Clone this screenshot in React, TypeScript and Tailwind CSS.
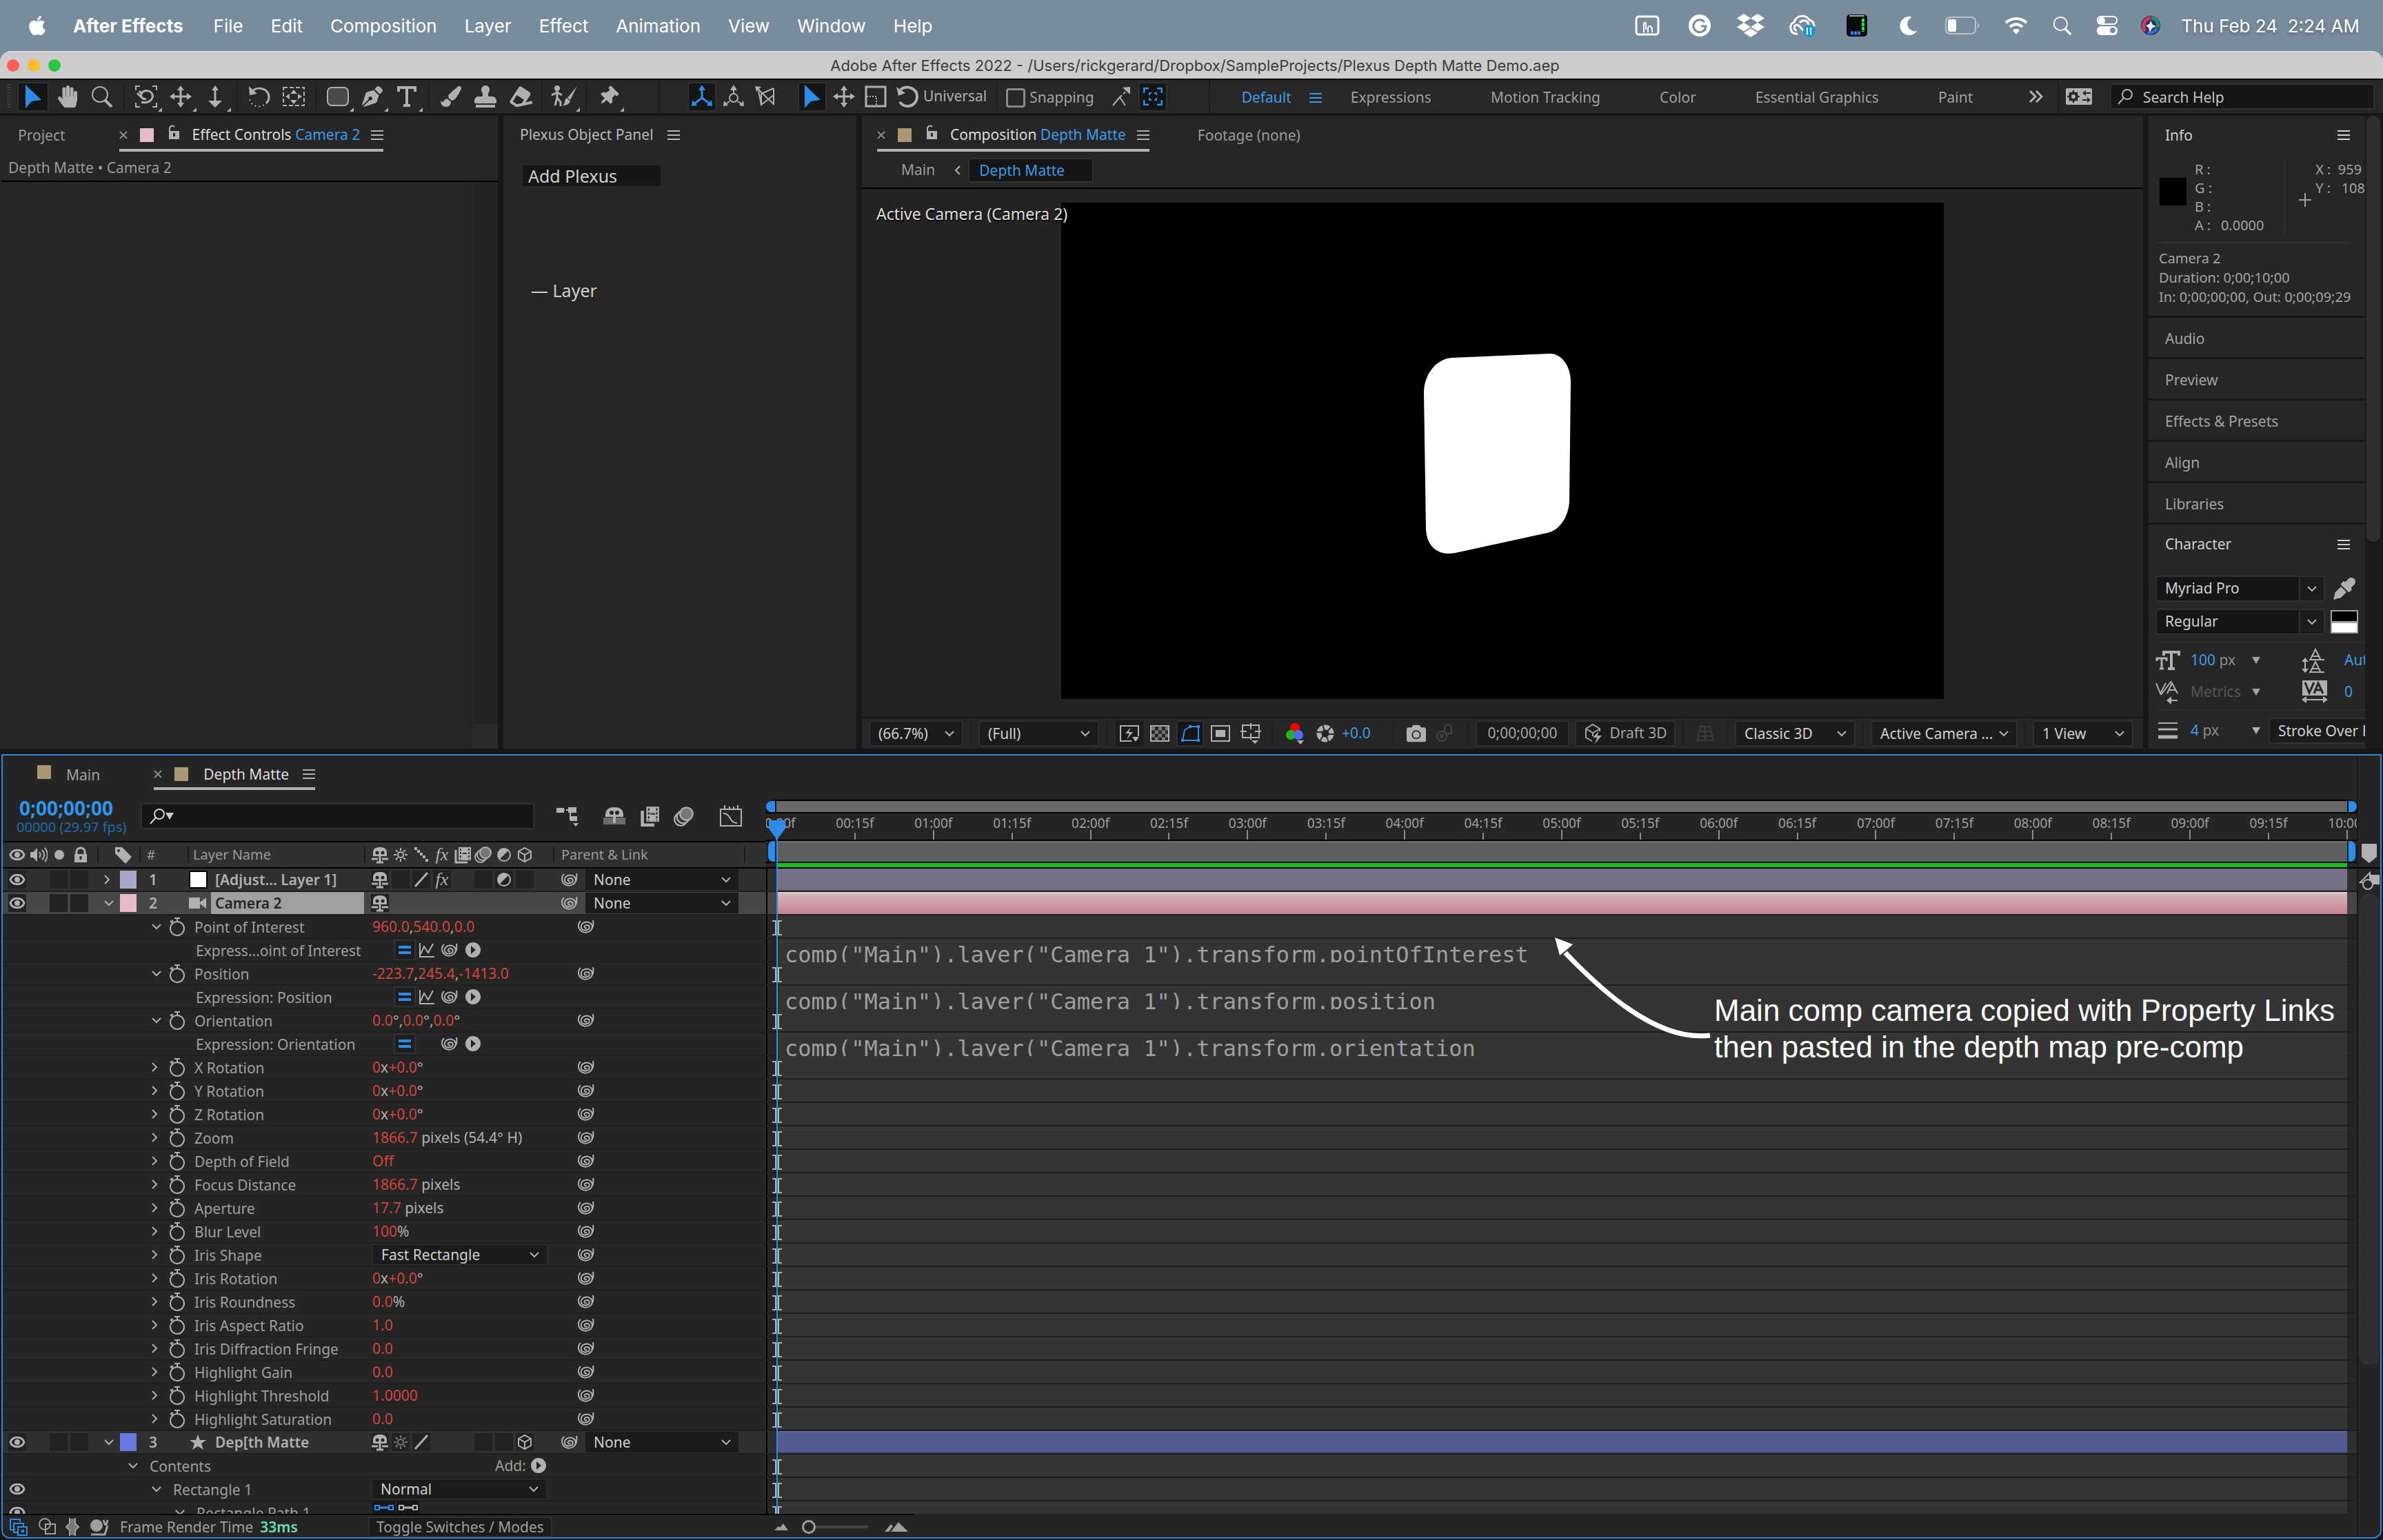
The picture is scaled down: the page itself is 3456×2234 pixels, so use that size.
import React from "react";
import {
  FaApple,
  FaDropbox,
  FaMoon,
  FaHandPaper,
  FaEraser,
  FaPaintBrush,
  FaThumbtack,
  FaCamera,
  FaPenNib,
  FaStamp,
  FaEyeDropper,
} from "react-icons/fa";

interface IconProps {
  w?: number;
  h?: number;
  box?: string;
  className?: string;
  children: React.ReactNode;
}

// Stroke icon base, colour comes from the text colour
const Icon: React.FC<IconProps> = ({
  w = 32,
  h = 32,
  box,
  className = "",
  children,
}) => (
  <svg
    width={w}
    height={h}
    viewBox={box ?? `0 0 ${w} ${h}`}
    fill="none"
    stroke="currentColor"
    strokeWidth={2}
    className={`shrink-0 ${className}`}
    aria-hidden="true"
  >
    {children}
  </svg>
);

const ChevronDown = () => (
  <Icon w={16} h={10}>
    <path d="M2 2l6 6 6-6" />
  </Icon>
);

const ChevronRight = () => (
  <Icon w={10} h={16}>
    <path d="M2 2l6 6-6 6" />
  </Icon>
);

const Burger = () => (
  <Icon w={18} h={16}>
    <path d="M0 2h18M0 8h18M0 14h18" />
  </Icon>
);

const Close = () => (
  <Icon w={12} h={12} className="text-[#8a8a8a]">
    <path d="M1 1l10 10M11 1L1 11" />
  </Icon>
);

const OpenLock = () => (
  <Icon w={18} h={22} className="-mt-2">
    <path d="M3 9V5a4 4 0 0 1 7-2" />
    <rect x="2" y="9" width="15" height="12" fill="currentColor" stroke="none" />
    <path d="M9.5 12v5" stroke="#262626" strokeWidth={3} />
  </Icon>
);

const Whip = () => (
  <Icon w={24} h={22}>
    <path d="M13 13c-4 2-5-4 0-4 5 0 5 6 0 7-6 2-9-2-8-6 1-5 8-7 13-4 4 3 4 9-1 12-5 3-12 2-15-4-2-4-1-8 2-11M22 2c1 6 0 11-3 14" />
  </Icon>
);

const Eye = () => (
  <Icon w={24} h={18}>
    <path d="M2 9c3-9 17-9 20 0-3 9-17 9-20 0z" strokeWidth={3} />
    <circle cx="12" cy="9" r="4" fill="currentColor" stroke="none" />
  </Icon>
);

const Stopwatch = () => (
  <Icon w={26} h={28}>
    <circle cx="13" cy="17" r="10" />
    <path d="M13 7V2M9 2h8M3 6l3 3M5 5l2 2" />
  </Icon>
);

const PlayDot = () => (
  <Icon w={24} h={24}>
    <circle cx="12" cy="12" r="11" fill="currentColor" stroke="none" />
    <path d="M9 6l7 6-7 6z" fill="#252525" stroke="none" />
  </Icon>
);

const Graph = () => (
  <Icon w={24} h={24}>
    <path d="M2 2v20h21M3 18l5-11 6 9 7-13" />
  </Icon>
);

const Shy = () => (
  <Icon w={26} h={26}>
    <path
      d="M3 15V10C3 4 7 2 13 2s10 2 10 8v5H3z"
      fill="currentColor"
      stroke="none"
    />
    <circle cx="9" cy="10" r="2.5" fill="#252525" stroke="none" />
    <circle cx="17" cy="10" r="2.5" fill="#252525" stroke="none" />
    <path d="M13 14v10M1 19h9M16 19h9M8 24h10" strokeWidth={3} />
  </Icon>
);

const Sun = () => (
  <Icon w={24} h={24}>
    <circle cx="12" cy="12" r="4" />
    <path d="M12 2v4M12 18v4M2 12h4M18 12h4M5 5l3 3M16 16l3 3M19 5l-3 3M8 16l-3 3" />
  </Icon>
);

const Quality = ({ dotted = false }: { dotted?: boolean }) => (
  <Icon w={24} h={24}>
    {dotted ? (
      <path d="M2 3h4M6 7h4M10 11h4M14 15h4M18 20h4" strokeWidth={4} />
    ) : (
      <path d="M3 22L21 2" strokeWidth={3} />
    )}
  </Icon>
);

const Fx = () => (
  <span className="font-['Liberation_Serif',serif] text-[26px] leading-[26px] italic">
    fx
  </span>
);

const Film = () => (
  <Icon w={26} h={26}>
    <rect x="7" y="2" width="18" height="19" fill="currentColor" stroke="none" />
    <path d="M10 4v16M22 4v16" stroke="#333" strokeDasharray="3 2" />
    <path d="M13 11h6" stroke="#333" />
    <path d="M3 6v18h17" strokeWidth={3} />
  </Icon>
);

const Blur = () => (
  <Icon w={26} h={26}>
    <circle cx="9" cy="16" r="8" />
    <circle cx="12" cy="13" r="8" fill="#333" />
    <circle cx="16" cy="10" r="8" fill="#777" />
  </Icon>
);

const Adjust = () => (
  <Icon w={24} h={24}>
    <circle cx="12" cy="12" r="9" />
    <path d="M5 19A10 10 0 0 1 19 5z" fill="currentColor" stroke="none" />
  </Icon>
);

const Cube = () => (
  <Icon w={22} h={24}>
    <path d="M11 2l9 5v10l-9 5-9-5V7zM2 7l9 5 9-5M11 12v10" />
  </Icon>
);

const Axis = () => (
  <Icon w={34} h={34}>
    <path d="M17 19V6M17 19L5 28M17 19l12 9" strokeWidth={3} />
    <path
      d="M17 0l5 8H12zM2 31l1-9 7 8zM32 31l-1-9-7 8z"
      fill="currentColor"
      stroke="none"
    />
  </Icon>
);

const Pointer = () => (
  <Icon w={26} h={36}>
    <path d="M2 1v34l9-10 14-2z" fill="currentColor" stroke="none" />
  </Icon>
);

const Move = () => (
  <Icon w={32} h={32}>
    <path d="M16 4v24M4 16h24" strokeWidth={3} />
    <path
      d="M16 0l5 7H11zM16 32l-5-7h10zM0 16l7-5v10zM32 16l-7 5V11z"
      fill="currentColor"
      stroke="none"
    />
  </Icon>
);

const Lens = ({ size = 32 }: { size?: number }) => (
  <Icon w={size} h={size} box="0 0 32 32">
    <circle cx="13" cy="13" r="11" />
    <path d="M20 21l10 10" strokeWidth={4} />
  </Icon>
);

const SearchLeft = () => (
  <Icon w={24} h={24}>
    <circle cx="15" cy="9" r="7" />
    <path d="M10 14L2 23" />
  </Icon>
);

const Corner = () => (
  <Icon w={6} h={6} className="absolute right-0 bottom-0">
    <path d="M6 0v6H0z" fill="currentColor" stroke="none" />
  </Icon>
);

const Triangle = () => (
  <Icon w={12} h={12}>
    <path d="M0 1h12L6 11z" fill="currentColor" stroke="none" />
  </Icon>
);

const Star = () => (
  <Icon w={26} h={24}>
    <path
      d="M13 1l3 8h9l-7 5 3 9-8-5-8 5 3-9-7-5h9z"
      fill="currentColor"
      stroke="none"
    />
  </Icon>
);

interface SelectProps {
  label: string;
  value: string;
  className?: string;
}

const Select: React.FC<SelectProps> = ({ label, value, className = "" }) => (
  <div className={`relative shrink-0 bg-[#1b1b1b] ${className}`}>
    <select
      aria-label={label}
      className="h-full w-full appearance-none truncate bg-transparent pl-3 pr-8 text-[21px] leading-7 text-[#cfcfcf] outline-none"
    >
      <option>{value}</option>
    </select>
    <span className="pointer-events-none absolute inset-y-0 right-2.5 flex items-center">
      <ChevronDown />
    </span>
  </div>
);

const menus = [
  "File",
  "Edit",
  "Composition",
  "Layer",
  "Effect",
  "Animation",
  "View",
  "Window",
  "Help",
];

const MenuBar = () => (
  <header className="flex h-[74px] shrink-0 items-center bg-[#788c9e] pr-[34px] pl-[38px] font-[Inter,sans-serif] text-[26px] text-white [text-shadow:0_2px_4px_rgba(0,0,0,0.3)]">
    <FaApple className="mr-9 size-8" />
    <nav className="flex gap-10">
      <button className="mr-1 font-bold">After Effects</button>
      {menus.map((m) => (
        <button key={m}>{m}</button>
      ))}
    </nav>
    <div className="ml-auto flex items-center">
      <Icon w={36} h={30}>
        <rect x="2" y="2" width="32" height="26" rx="4" strokeWidth={3} />
        <path d="M13 25V13c0-3 3-3 3 0v8M19 25v-7c3-4 6-1 6 3v4" />
      </Icon>
      <Icon w={32} h={32} className="ml-[42px]">
        <circle cx="16" cy="16" r="16" fill="white" stroke="none" />
        <path d="M23 11a9 9 0 1 0 2 6h-7M24 17v6" stroke="#788c9e" strokeWidth={3} />
      </Icon>
      <FaDropbox className="ml-[38px] size-10" />
      <Icon w={40} h={34} className="ml-[34px]">
        <path d="M14 29H11a9 9 0 0 1-2-17C12 2 26 0 31 9c5 1 7 5 7 9" strokeWidth={3} />
        <path d="M13 24c-5 0-5-8 0-8 4 0 7 8 12 10M17 13c4-5 12-4 13 3" strokeWidth={3} />
        <circle cx="31" cy="25" r="9" fill="#1398d4" stroke="none" />
        <path d="M28 20v10M33 20v10" />
      </Icon>
      <Icon w={30} h={34} className="ml-[45px]">
        <rect x="0" y="1" width="30" height="32" rx="5" fill="#0b0b0b" stroke="none" />
        <path d="M4 3h22" stroke="#aaa" />
        <path d="M24 7v19" stroke="#2ee84b" strokeWidth={4} strokeDasharray="5 1" />
        <path d="M6 28h14" stroke="#3b78ff" strokeWidth={5} strokeDasharray="4 1" />
      </Icon>
      <FaMoon className="ml-[46px] size-[27px]" />
      <Icon w={50} h={26} className="ml-10">
        <rect x="1" y="1" width="43" height="24" rx="6" stroke="#b9c4ce" />
        <rect x="4" y="4" width="12" height="18" rx="3" fill="white" stroke="none" />
        <path d="M47 9c3 2 3 6 0 8z" fill="#b9c4ce" stroke="none" />
      </Icon>
      <Icon w={34} h={26} className="ml-9">
        <path d="M2 9c9-8 21-8 30 0M8 15c6-5 12-5 18 0" strokeWidth={4} />
        <path d="M17 26l-5-6c3-3 7-3 10 0z" fill="white" stroke="none" />
      </Icon>
      <span className="ml-9">
        <Lens size={28} />
      </span>
      <Icon w={30} h={28} className="ml-9">
        <rect x="1" y="1" width="28" height="11" rx="5" />
        <circle cx="7" cy="7" r="4" fill="white" />
        <rect x="0" y="15" width="30" height="13" rx="6" fill="white" stroke="none" />
        <circle cx="23" cy="21" r="4" fill="#788c9e" stroke="none" />
      </Icon>
      <Icon w={28} h={28} className="ml-[34px]">
        <circle cx="14" cy="14" r="14" fill="#2b3563" stroke="none" />
        <path d="M6 22C0 14 6 4 14 3" stroke="#d23a56" strokeWidth={5} />
        <path d="M15 3c8 1 11 8 9 14" stroke="#2f8a6b" strokeWidth={5} />
        <path d="M23 18c-3 6-9 8-14 6" stroke="#3b66d8" strokeWidth={4} />
        <path d="M14 7l3 6 5 2-6 3-3 6-2-7-4-3 5-2z" fill="#d9efff" stroke="none" />
      </Icon>
      <time className="ml-[30px] whitespace-pre">Thu Feb 24  2:24 AM</time>
    </div>
  </header>
);

const TitleBar = () => (
  <div className="flex h-[42px] shrink-0 items-center justify-center rounded-t-2xl border-t border-b-2 border-t-[#e8e8e8] border-b-black bg-[#ccc] text-[#3c3c3c]">
    <div className="flex flex-1 gap-3 pl-2.5">
      <button aria-label="Close" className="size-[18px] rounded-full bg-[#ff5f57]" />
      <button aria-label="Minimize" className="size-[18px] rounded-full bg-[#febc2e]" />
      <button aria-label="Zoom" className="size-[18px] rounded-full bg-[#28c840]" />
    </div>
    <h1 className="font-[Inter,sans-serif] text-[22px] leading-8">
      Adobe After Effects 2022 - /Users/rickgerard/Dropbox/SampleProjects/Plexus
      Depth Matte Demo.aep
    </h1>
    <div className="flex-1" />
  </div>
);

interface ToolProps {
  name: string;
  active?: boolean;
  corner?: boolean;
  slim?: boolean;
  children: React.ReactNode;
}

const Tool: React.FC<ToolProps> = ({ name, active, corner, slim, children }) => (
  <button
    aria-label={name}
    className={`relative mx-0.5 flex h-[43px] shrink-0 items-center justify-center rounded ${
      slim ? "w-[42px]" : "w-[46px]"
    } ${active ? "border-2 border-[#303030] bg-[#151515] text-[#2d8ceb]" : ""}`}
  >
    {children}
    {corner && <Corner />}
  </button>
);

const Sep = () => <span className="mx-1.5 h-9 w-0.5 shrink-0 bg-[#1f1f1f]" />;

const workspaces = [
  { name: "Expressions", gap: "ml-[42px]" },
  { name: "Motion Tracking", gap: "ml-[86px]" },
  { name: "Color", gap: "ml-[86px]" },
  { name: "Essential Graphics", gap: "ml-[86px]" },
  { name: "Paint", gap: "ml-[86px]" },
];

const Toolbar = () => (
  <div className="flex h-12 shrink-0 items-center bg-[#272727] pr-3 pl-2.5">
    <span className="mr-[7px] h-9 w-1.5 bg-[repeating-linear-gradient(#3a3a3a_0_2px,transparent_2px_4px)]" />
    <Tool name="Selection" active>
      <Pointer />
    </Tool>
    <Tool name="Hand">
      <FaHandPaper className="size-8" />
    </Tool>
    <Tool name="Zoom">
      <Lens />
    </Tool>
    <Sep />
    <Tool name="Orbit" corner>
      <Icon w={34} h={34}>
        <path d="M2 8V2h6M26 2h6v6M2 26v6h6M32 26v6h-6" />
        <path d="M10 25c10 3 18-4 16-11-3-7-13-7-16-1-2 5 3 9 7 7M4 12l6 6M7 9l4 5" strokeWidth={3} />
      </Icon>
    </Tool>
    <Tool name="Pan" corner>
      <Move />
    </Tool>
    <Tool name="Dolly" corner>
      <Icon w={20} h={32}>
        <path d="M10 5v20" strokeWidth={3} />
        <path d="M10 0l5 7H5zM10 32L0 22h20z" fill="currentColor" stroke="none" />
      </Icon>
    </Tool>
    <Sep />
    <Tool name="Rotation">
      <Icon w={32} h={32}>
        <path d="M5 9C13 0 30 4 30 17c0 4-2 7-4 9" strokeWidth={3} />
        <path d="M23 28C14 34 2 28 2 18" strokeDasharray="2 4" />
        <path d="M1 1l1 13 11-2z" fill="currentColor" stroke="none" />
      </Icon>
    </Tool>
    <Tool name="Anchor Point">
      <Icon w={32} h={32}>
        <rect x="1" y="3" width="30" height="26" strokeDasharray="6 3" />
        <path d="M16 6l5 6H11zM16 27l-5-6h10zM4 16l6-4v8zM28 16l-6 4v-8z" fill="currentColor" stroke="none" />
      </Icon>
    </Tool>
    <Sep />
    <Tool name="Rounded Rectangle" corner>
      <Icon w={32} h={32}>
        <rect x="1" y="3" width="30" height="26" rx="6" fill="#4a4a4a" />
      </Icon>
    </Tool>
    <Tool name="Pen" corner>
      <FaPenNib className="size-[30px]" />
    </Tool>
    <Tool name="Type" corner>
      <Icon w={28} h={30}>
        <path d="M2 8V2h24v6M14 2v26M9 28h10" strokeWidth={4} />
      </Icon>
    </Tool>
    <Sep />
    <Tool name="Brush">
      <FaPaintBrush className="size-[30px]" />
    </Tool>
    <Tool name="Clone Stamp">
      <FaStamp className="size-8" />
    </Tool>
    <Tool name="Eraser">
      <FaEraser className="size-8 -rotate-12" />
    </Tool>
    <Sep />
    <Tool name="Roto Brush" corner>
      <Icon w={40} h={32}>
        <circle cx="10" cy="4" r="3" fill="currentColor" />
        <path d="M10 8v10l-3 11M10 18l5 6v6M2 14l8-4 7 4" strokeWidth={3} />
        <path d="M39 1L25 18l4 3z" fill="currentColor" stroke="none" />
        <path d="M24 18l5 5c-2 5-7 6-11 6 4-3 2-8 6-11z" fill="currentColor" stroke="none" />
      </Icon>
    </Tool>
    <Sep />
    <Tool name="Puppet Pin" corner>
      <FaThumbtack className="size-7 rotate-45" />
    </Tool>
    <span className="mr-[38px] ml-12 h-12 w-0.5 bg-[#1f1f1f]" />
    <Tool name="Local Axis" active slim>
      <Axis />
    </Tool>
    <Tool name="World Axis" slim>
      <Icon w={34} h={34}>
        <path d="M17 13V4M11 24l-7 5M23 24l7 5" />
        <circle cx="17" cy="19" r="6" />
        <path d="M17 0l5 8H12zM2 31l1-8 6 7zM32 31l-1-8-6 7z" fill="currentColor" stroke="none" />
      </Icon>
    </Tool>
    <Tool name="View Axis" slim>
      <Icon w={32} h={32}>
        <path d="M5 5l23 22M28 4v24M10 12L28 4M10 12v16l18-14M10 28L6 8" />
        <path d="M1 1l9 1-7 7z" fill="currentColor" stroke="none" />
      </Icon>
    </Tool>
    <span className="ml-2.5">
      <Sep />
    </span>
    <Tool name="Gizmo" active slim>
      <Pointer />
    </Tool>
    <Tool name="Position" slim>
      <Move />
    </Tool>
    <Tool name="Scale" slim>
      <Icon w={32} h={32}>
        <rect x="2" y="2" width="28" height="28" strokeWidth={3} />
        <path d="M3 16h14v14" strokeDasharray="2 2" />
      </Icon>
    </Tool>
    <Tool name="Rotate" slim>
      <Icon w={34} h={34}>
        <path d="M7 7c10-8 24-1 24 10 0 8-6 14-14 14-5 0-9-3-11-6" strokeWidth={4} />
        <path d="M1 3l3 13 10-4z" fill="currentColor" stroke="none" />
      </Icon>
    </Tool>
    <span className="mr-2 text-[21px]">Universal</span>
    <Sep />
    <label className="ml-1.5 flex items-center gap-1.5 pt-1 text-[21px] text-[#a3a3a3]">
      <input
        type="checkbox"
        className="size-7 appearance-none rounded border-[3px] border-[#8a8a8a]"
      />
      Snapping
    </label>
    <span className="ml-4">
      <Tool name="Snap Edges" slim>
        <Icon w={28} h={28}>
          <path d="M2 27L12 15l8 12" />
          <path d="M12 15L24 4" strokeDasharray="4 3" />
          <path d="M27 0v11L16 1z" fill="currentColor" stroke="none" />
        </Icon>
      </Tool>
    </span>
    <Tool name="Snap Features" active slim>
      <Icon w={28} h={26}>
        <path d="M1 8V1h7M20 1h7v7M27 18v7h-7M8 25H1v-7" strokeWidth={3} />
        <path d="M9 11V8h3M16 8h3v3M19 15v3h-3M12 18H9v-3" />
      </Icon>
    </Tool>
    <span className="ml-[58px] h-12 w-0.5 bg-[#1a1a1a]" />
    <nav className="flex items-center pt-1 pl-[46px] text-[21px] whitespace-nowrap text-[#9f9f9f]">
      <button className="mr-[26px] text-[#3d9be9]">Default</button>
      <span className="text-[#3d9be9]">
        <Burger />
      </span>
      {workspaces.map((w) => (
        <button key={w.name} className={w.gap}>
          {w.name}
        </button>
      ))}
    </nav>
    <button aria-label="More workspaces" className="ml-auto">
      <Icon w={22} h={18}>
        <path d="M2 1l8 8-8 8M11 1l8 8-8 8" strokeWidth={3} />
      </Icon>
    </button>
    <span className="ml-5 h-12 w-0.5 bg-[#1f1f1f]" />
    <Icon w={38} h={24} className="mr-3 ml-2.5">
      <rect width="38" height="24" rx="2" fill="currentColor" stroke="none" />
      <circle cx="11" cy="12" r="5" stroke="#272727" strokeWidth={4} />
      <path d="M11 3v18M2 12h18M5 6l12 12M17 6L5 18" stroke="#272727" />
      <circle cx="11" cy="12" r="3" fill="currentColor" stroke="none" />
      <path d="M36 7H25M24 17h11" stroke="#272727" />
      <path d="M24 7l5-4v8zM36 17l-5-4v8z" fill="#272727" stroke="none" />
    </Icon>
    <label className="ml-3.5 flex h-[38px] w-[384px] items-center gap-3.5 rounded border-2 border-[#303030] bg-[#151515] px-2">
      <SearchLeft />
      <input
        aria-label="Search Help"
        placeholder="Search Help"
        className="min-w-0 flex-1 bg-transparent pt-1 text-[21px] outline-none placeholder:text-[#c4c4c4]"
      />
    </label>
  </div>
);

const EffectControls = () => (
  <section className="flex w-[722px] shrink-0 flex-col bg-[#262626] pl-0.5">
    <div className="flex h-[54px] items-start pl-6 text-[21px]">
      <button className="mt-3 leading-8 text-[#9a9a9a]">Project</button>
      <div className="ml-[78px] flex h-[52px] items-center border-b-4 border-[#b3b3b3] pt-2">
        <Close />
        <span className="ml-[18px] size-5 bg-[#e6bccb]" />
        <span className="mr-[18px] ml-5">
          <OpenLock />
        </span>
        <h2 className="text-[#dcdcdc]">
          Effect Controls <span className="text-[#3d9be9]">Camera 2</span>
        </h2>
        <span className="ml-4">
          <Burger />
        </span>
      </div>
    </div>
    <p className="h-[42px] border-b-2 border-black pl-2.5 text-[21px] leading-[43px] text-[#9a9a9a]">
      Depth Matte • Camera 2
    </p>
    <div className="flex flex-1 flex-col items-end">
      <div className="w-9 flex-1 border-l border-[#2d2d2d] bg-[#242424]" />
      <div className="h-9 w-9 bg-[#2a2a2a]" />
    </div>
  </section>
);

const PlexusPanel = () => (
  <section className="w-[512px] shrink-0 bg-[#262626] px-7 text-[25px] text-[#cfcfcf]">
    <div className="-ml-1 flex h-14 items-center gap-5 text-[21px] text-[#b8b8b8]">
      <h2>Plexus Object Panel</h2>
      <Burger />
    </div>
    <button className="mt-4 block h-[30px] w-[200px] bg-[#161616] pl-2 text-left leading-[30px]">
      Add Plexus
    </button>
    <p className="mt-[135px] ml-3 leading-8">— Layer</p>
  </section>
);

const footSelect = "h-[38px] rounded border-2 border-[#303030]";

const FootSep = () => <span className="mx-2.5 h-9 w-0.5 shrink-0 bg-[#1f1f1f]" />;

const CompFooter = () => (
  <div className="flex h-[46px] items-center border-t-2 border-[#161616] pl-2.5 text-[21px]">
    <Select label="Magnification" value="(66.7%)" className={`w-[137px] ${footSelect}`} />
    <FootSep />
    <Select label="Resolution" value="(Full)" className={`w-[175px] ${footSelect}`} />
    <FootSep />
    <div className="ml-0.5 flex items-center gap-1">
      <button aria-label="Fast Previews" className="flex h-[38px] w-10 items-center justify-center rounded bg-[#1b1b1b]">
        <Icon w={30} h={26}>
          <path d="M18 24H2V2h26v15" />
          <path d="M17 4l-8 9h6l-4 9 9-11h-6z" fill="currentColor" stroke="none" />
          <path d="M19 18h10l-5 7z" fill="currentColor" stroke="none" />
        </Icon>
      </button>
      <button aria-label="Transparency Grid" className="flex w-10 justify-center">
        <Icon w={28} h={24}>
          <rect x="1" y="1" width="26" height="22" />
          <path d="M2 5h24M2 15h24" strokeWidth={5} strokeDasharray="5 5" stroke="#777" />
          <path d="M7 10h20M7 20h20" strokeWidth={5} strokeDasharray="5 5" stroke="#777" />
        </Icon>
      </button>
      <button aria-label="Mask Visibility" className="flex h-[38px] w-10 items-center justify-center rounded border-2 border-[#303030] bg-[#151515] text-[#2d8ceb]">
        <Icon w={32} h={28}>
          <path d="M5 24L8 9l8-5h12v20z" />
          <path d="M3 22h4v4H3zM26 22h4v4h-4zM26 2h4v4h-4zM14 2h4v4h-4z" fill="currentColor" stroke="none" />
        </Icon>
      </button>
      <button aria-label="Region of Interest" className="flex w-10 justify-center">
        <Icon w={28} h={24}>
          <rect x="1" y="1" width="26" height="22" />
          <rect x="7" y="7" width="14" height="10" fill="currentColor" stroke="none" />
        </Icon>
      </button>
      <button aria-label="Guides" className="flex w-10 justify-center">
        <Icon w={30} h={30}>
          <rect x="3" y="3" width="24" height="18" />
          <path d="M15 0v9M15 15v9M0 12h9M21 12h9" />
          <path d="M16 25h10l-5 5z" fill="currentColor" stroke="none" />
        </Icon>
      </button>
    </div>
    <FootSep />
    <Icon w={28} h={32} className="ml-2">
      <circle cx="14" cy="8" r="7" fill="#f00" stroke="none" />
      <circle cx="8" cy="18" r="7" fill="#1db81d" stroke="none" />
      <circle cx="19" cy="18" r="7" fill="#4a6cff" stroke="none" />
      <path d="M17 26h10l-5 6z" fill="currentColor" stroke="none" />
    </Icon>
    <Icon w={28} h={28} className="ml-4">
      <circle cx="14" cy="14" r="9" strokeWidth={7} />
      <path d="M10 1l3 9M23 4l-6 7M28 15l-10 0M19 27l-3-9M6 25l5-8M0 12l10 0" stroke="#262626" />
    </Icon>
    <span className="ml-2.5 w-16 text-[#3d9be9]">+0.0</span>
    <FootSep />
    <FaCamera className="ml-2 size-[28px]" />
    <Icon w={28} h={28} className="mr-2 ml-3.5 text-[#444]">
      <circle cx="9" cy="18" r="7" />
      <circle cx="9" cy="18" r="2" />
      <path d="M13 12V6a5 5 0 0 1 10 0v8h-7" />
    </Icon>
    <FootSep />
    <button className="h-[38px] w-[136px] rounded border-2 border-[#303030] bg-[#1b1b1b] text-[#a3a3a3]">
      0;00;00;00
    </button>
    <button className="ml-2 flex h-[38px] w-[146px] items-center justify-center gap-2 rounded border-2 border-[#303030] bg-[#1b1b1b] text-[#a3a3a3]">
      <Icon w={30} h={30}>
        <path d="M12 26l-9-5V8l10-6 10 6v4M3 8l10 6 9-5M13 14v5" />
        <path d="M21 12l-8 9h6l-3 9 10-12h-6z" fill="currentColor" stroke="none" />
      </Icon>
      Draft 3D
    </button>
    <FootSep />
    <Icon w={26} h={22} className="mx-2 text-[#3c3c3c]">
      <path d="M6 1h14l5 20H1zM4 8h18M2 15h22M13 1v20" />
    </Icon>
    <FootSep />
    <Select label="3D Renderer" value="Classic 3D" className={`w-[175px] ${footSelect}`} />
    <FootSep />
    <Select label="Camera" value="Active Camera ..." className={`w-[213px] ${footSelect}`} />
    <FootSep />
    <Select label="Views" value="1 View" className={`w-[146px] ${footSelect}`} />
  </div>
);

const CompPanel = () => (
  <section className="flex min-w-0 flex-1 flex-col bg-[#262626]">
    <div className="flex h-[54px] items-start pl-[22px] text-[21px]">
      <div className="flex h-[52px] items-center border-b-4 border-[#b3b3b3] pt-2">
        <Close />
        <span className="ml-[18px] size-5 bg-[#a99873]" />
        <span className="mr-[18px] ml-5">
          <OpenLock />
        </span>
        <h2 className="text-[#dcdcdc]">
          Composition <span className="text-[#3d9be9]">Depth Matte</span>
        </h2>
        <span className="ml-4">
          <Burger />
        </span>
      </div>
      <button className="mt-3 ml-[70px] leading-8 text-[#9a9a9a]">
        Footage (none)
      </button>
    </div>
    <div className="flex h-[52px] items-center border-b-2 border-black pl-[57px] text-[21px]">
      <button className="text-[#9a9a9a]">Main</button>
      <Icon w={10} h={16} className="mr-2.5 ml-7">
        <path d="M8 2L2 8l6 6" />
      </Icon>
      <button className="h-9 w-[182px] rounded border-2 border-[#303030] bg-[#151515] pl-3.5 text-left leading-8 text-[#3d9be9]">
        Depth Matte
      </button>
    </div>
    <div className="relative flex flex-1 justify-center bg-[#232323] pt-5 pb-[26px]">
      <svg viewBox="0 0 1280 720" className="aspect-video w-[1280px] self-start bg-black">
        <path
          d="M526 276C526 248 545 226 567 225L709 219C726 219 739 238 739 259L737 433C736 456 722 476 705 479L572 508C548 513 530 500 529 473Z"
          fill="white"
        />
      </svg>
      <p className="absolute top-5 left-[21px] text-[23px] leading-8 text-[#dedede] [text-shadow:1px_2px_1px_black]">
        Active Camera (Camera 2)
      </p>
    </div>
    <CompFooter />
  </section>
);

const InfoPanel = () => (
  <div className="h-[290px] overflow-hidden text-[20px] leading-7 text-[#a3a3a3]">
    <div className="flex h-14 items-center justify-between pr-[22px] pl-6 text-[21px] text-[#cfcfcf]">
      <h2>Info</h2>
      <Burger />
    </div>
    <div className="flex h-[127px] pt-2 pl-4">
      <span className="mt-[26px] h-10 w-10 bg-black" />
      <dl className="ml-3 grid h-27 w-[135px] grid-cols-[38px_1fr] border-r-2 border-[#2e2e2e] leading-[27px]">
        <dt>R :</dt>
        <dd />
        <dt>G :</dt>
        <dd />
        <dt>B :</dt>
        <dd />
        <dt>A :</dt>
        <dd>0.0000</dd>
      </dl>
      <Icon w={18} h={20} className="mt-12 ml-5">
        <path d="M9 0v20M0 10h18" />
      </Icon>
      <p className="ml-1.5 leading-[27px] whitespace-pre">{"X :  959\nY :   108"}</p>
    </div>
    <div className="mr-5 ml-3.5 border-t-2 border-[#2e2e2e]" />
    <p className="pt-2 pl-[15px] whitespace-nowrap">
      Camera 2
      <br />
      Duration: 0;00;10;00
      <br />
      In: 0;00;00;00, Out: 0;00;09;29
    </p>
  </div>
);

const FontSelect: React.FC<SelectProps> = ({ label, value }) => (
  <div className="relative h-[38px] w-[246px] rounded border-2 border-[#303030] bg-[#151515]">
    <select
      aria-label={label}
      className="h-full w-full appearance-none bg-transparent pl-3 text-[21px] text-[#cfcfcf] outline-none"
    >
      <option>{value}</option>
    </select>
    <span className="pointer-events-none absolute inset-y-0 right-0 flex w-9 items-center justify-center border-l-2 border-[#303030] bg-[#1b1b1b]">
      <ChevronDown />
    </span>
  </div>
);

const CharacterPanel = () => (
  <div className="text-[21px]">
    <div className="flex h-[58px] items-center justify-between pr-[22px] pl-6 text-[#cfcfcf]">
      <h2>Character</h2>
      <Burger />
    </div>
    <div className="mt-4 flex flex-col gap-2.5 pl-2.5">
      <div className="flex items-center gap-3">
        <FontSelect label="Font family" value="Myriad Pro" />
        <FaEyeDropper className="size-8" />
      </div>
      <div className="flex items-center gap-2">
        <FontSelect label="Font style" value="Regular" />
        <span className="flex h-[34px] w-10 flex-col border-2 border-[#a3a3a3] bg-white">
          <span className="h-[17px] border-b-[3px] border-[#a3a3a3] bg-black" />
        </span>
      </div>
    </div>
    <div className="mt-2.5 ml-2.5 grid h-[100px] grid-cols-[51px_89px_72px_62px_1fr] grid-rows-[50px_42px] items-center border-y-2 border-[#2c2c2c] text-[#3d9be9]">
      <Icon w={36} h={30} className="text-[#b0b0b0]">
        <path d="M2 16v-4h14v4M9 12v15M6 27h6" strokeWidth={3} />
        <path d="M12 8V3h22v5M23 3v24M18 27h10" strokeWidth={4} />
      </Icon>
      <span>
        100 <span className="text-[#8c8c8c]">px</span>
      </span>
      <span className="text-[#a3a3a3]">
        <Triangle />
      </span>
      <Icon w={34} h={36} className="text-[#b0b0b0]">
        <path d="M13 16l7-14 7 14M16 12h8M11 17h22M13 34l7-14 7 14M16 30h8M11 35h22M5 18v16" />
        <path d="M5 14l5 6H0zM5 36l-5-6h10z" fill="currentColor" stroke="none" />
      </Icon>
      <span>Auto</span>
      <Icon w={36} h={36} className="text-[#b0b0b0]">
        <path d="M1 5l6 15 8-15M8 22L23 2M17 20l7-15 8 15M20 15h9" />
        <path d="M32 30H20" />
        <path d="M16 30l7-6v12z" fill="currentColor" stroke="none" />
      </Icon>
      <span className="text-[#555]">Metrics</span>
      <span className="text-[#a3a3a3]">
        <Triangle />
      </span>
      <Icon w={38} h={34} className="text-[#b0b0b0]">
        <rect x="1" width="36" height="22" fill="currentColor" stroke="none" />
        <path d="M5 3l6 15 7-15M18 19l6-15 7 15M20 14h9" stroke="#262626" strokeWidth={3} />
        <path d="M5 28h28" />
        <path d="M0 28l7-5v10zM38 28l-7 5V23z" fill="currentColor" stroke="none" />
      </Icon>
      <span>0</span>
    </div>
    <div className="mt-2.5 ml-3.5 flex items-center">
      <Icon w={28} h={26}>
        <path d="M0 2h28" />
        <path d="M0 11h28" strokeWidth={3} />
        <path d="M0 22h28" strokeWidth={5} />
      </Icon>
      <span className="ml-[19px] w-[89px] shrink-0 text-[#3d9be9]">
        4 <span className="text-[#8c8c8c]">px</span>
      </span>
      <Triangle />
      <Select
        label="Stroke order"
        value="Stroke Over Fill"
        className="ml-3 h-[38px] w-[260px] rounded border-2 border-[#303030]"
      />
    </div>
  </div>
);

const sections = ["Audio", "Preview", "Effects & Presets", "Align", "Libraries"];

const RightPanels = () => (
  <aside className="flex w-[340px] shrink-0 bg-[#1a1a1a]">
    <div className="w-[314px] overflow-hidden bg-[#262626]">
      <InfoPanel />
      {sections.map((s) => (
        <button
          key={s}
          className="block h-[60px] w-full border-t-[3px] border-[#161616] pt-1 pl-6 text-left text-[21px] text-[#a3a3a3]"
        >
          {s}
        </button>
      ))}
      <div className="border-t-[3px] border-[#161616]">
        <CharacterPanel />
      </div>
    </div>
    <div className="ml-0.5 h-[618px] w-5 rounded-full bg-[#303030]" />
  </aside>
);

interface Layer {
  num: number;
  name: string;
  color: string;
  bar: string;
  open?: boolean;
  selected?: boolean;
  icon: React.ReactNode;
  switches: (React.ReactNode | null | "empty")[];
}

const layers: Layer[] = [
  {
    num: 1,
    name: "[Adjust... Layer 1]",
    color: "bg-[#aaa6c9]",
    bar: "border-b-2 border-[#62616f] bg-[#747284]",
    icon: <span className="h-[26px] w-[27px] border-2 border-black bg-white" />,
    switches: [<Shy />, "empty", <Quality />, <Fx />, null, "empty", <Adjust />, "empty"],
  },
  {
    num: 2,
    name: "Camera 2",
    color: "bg-[#e6bccb]",
    bar: "border-t-2 border-[#e3d3d8] bg-linear-to-b from-[#d5b6be] to-[#c67f94]",
    open: true,
    selected: true,
    icon: (
      <Icon w={26} h={18}>
        <path d="M0 1h16v16H0zM16 8l9-7v16l-9-7z" fill="currentColor" stroke="none" />
      </Icon>
    ),
    switches: [<Shy />, null, null, null, null, null, null, null],
  },
  {
    num: 3,
    name: "Dep[th Matte",
    color: "bg-[#667adf]",
    bar: "border-y-2 border-t-[#5a66a5] border-b-[#434a75] bg-[#525a8f]",
    open: true,
    icon: <Star />,
    switches: [
      <Shy />,
      <span className="text-[#777]">
        <Sun />
      </span>,
      <Quality />,
      null,
      null,
      "empty",
      "empty",
      <Cube />,
    ],
  },
];

interface Prop {
  name: string;
  value?: React.ReactNode;
  open?: boolean;
  expr?: string; // shown in the row under the property
  exprName?: string;
  graph?: boolean;
}

const Red = ({ children }: { children: React.ReactNode }) => (
  <span className="text-[#d2443c]">{children}</span>
);

const Rotation = () => (
  <>
    <Red>0</Red>x<Red>+0.0</Red>°
  </>
);

const props: Prop[] = [
  {
    name: "Point of Interest",
    value: <><Red>960.0</Red>,<Red>540.0</Red>,<Red>0.0</Red></>,
    open: true,
    exprName: "Express...oint of Interest",
    expr: 'comp("Main").layer("Camera 1").transform.pointOfInterest',
    graph: true,
  },
  {
    name: "Position",
    value: <><Red>-223.7</Red>,<Red>245.4</Red>,<Red>-1413.0</Red></>,
    open: true,
    exprName: "Expression: Position",
    expr: 'comp("Main").layer("Camera 1").transform.position',
    graph: true,
  },
  {
    name: "Orientation",
    value: <><Red>0.0</Red>°,<Red>0.0</Red>°,<Red>0.0</Red>°</>,
    open: true,
    exprName: "Expression: Orientation",
    expr: 'comp("Main").layer("Camera 1").transform.orientation',
  },
  { name: "X Rotation", value: <Rotation /> },
  { name: "Y Rotation", value: <Rotation /> },
  { name: "Z Rotation", value: <Rotation /> },
  { name: "Zoom", value: <><Red>1866.7</Red> pixels (54.4° H)</> },
  { name: "Depth of Field", value: <Red>Off</Red> },
  { name: "Focus Distance", value: <><Red>1866.7</Red> pixels</> },
  { name: "Aperture", value: <><Red>17.7</Red> pixels</> },
  { name: "Blur Level", value: <><Red>100</Red>%</> },
  {
    name: "Iris Shape",
    value: (
      <Select label="Iris Shape" value="Fast Rectangle" className="h-[30px] w-[254px] border border-[#303030]" />
    ),
  },
  { name: "Iris Rotation", value: <Rotation /> },
  { name: "Iris Roundness", value: <><Red>0.0</Red>%</> },
  { name: "Iris Aspect Ratio", value: <Red>1.0</Red> },
  { name: "Iris Diffraction Fringe", value: <Red>0.0</Red> },
  { name: "Highlight Gain", value: <Red>0.0</Red> },
  { name: "Highlight Threshold", value: <Red>1.0000</Red> },
  { name: "Highlight Saturation", value: <Red>0.0</Red> },
];

const layerGrid =
  "grid grid-cols-[170px_24px_76px_32px_222px_8px_240px_34px_39px_222px_1fr] items-center";

const Box = ({ children, dark = true }: { children?: React.ReactNode; dark?: boolean }) => (
  <span
    className={`mx-0.5 flex size-[26px] shrink-0 items-center justify-center ${
      dark ? "bg-[#222]" : ""
    }`}
  >
    {children}
  </span>
);

interface RowProps {
  left: React.ReactNode;
  bg?: string;
  children?: React.ReactNode;
}

const Row: React.FC<RowProps> = ({ left, bg = "bg-[#252525]", children }) => (
  <div className="flex h-[34px] shrink-0 border-b-2 border-[#1e1e1e]">
    <div className={`h-8 w-[1107px] shrink-0 ${bg}`}>{left}</div>
    <div className={`flex h-8 min-w-0 flex-1 border-l-2 border-l-black pr-3.5 pl-[13px] ${bg}`}>
      {children}
    </div>
  </div>
);

const IBeam = () => (
  <Icon w={16} h={24} className="mt-1.5 -ml-[7px] text-[#b0b0b0]">
    <path d="M1 2h14M1 22h14" />
    <path d="M8 2v20" strokeWidth={6} />
  </Icon>
);

const PropTrack = () => (
  <div className="h-8 flex-1 bg-[#343434]">
    <IBeam />
  </div>
);

const LayerRow = ({ layer }: { layer: Layer }) => (
  <Row
    bg={layer.selected ? "bg-[#464646]" : "bg-[#303030]"}
    left={
      <div className={`h-8 text-[#b0b0b0] ${layerGrid}`}>
        <div className="flex h-8 items-center pl-1.5">
          <Box>
            <Eye />
          </Box>
          <span className="w-[30px]" />
          <Box />
          <Box />
          <button aria-label="Toggle layer" className="ml-5">
            {layer.open ? <ChevronDown /> : <ChevronRight />}
          </button>
        </div>
        <span className={`h-[26px] ${layer.color}`} />
        <b className="pl-[18px] font-semibold">{layer.num}</b>
        {layer.icon}
        <b
          className={`truncate pl-1.5 leading-8 font-semibold ${
            layer.selected ? "bg-[#9f9f9f] text-[#242424]" : ""
          }`}
        >
          {layer.name}
        </b>
        <span />
        <div className="flex">
          {layer.switches.map((s, i) => (
            <Box key={i} dark={s !== null}>
              {s === "empty" ? null : s}
            </Box>
          ))}
        </div>
        <span />
        <span className="pl-1">
          <Whip />
        </span>
        <Select label={`Parent of ${layer.name}`} value="None" className="h-[30px]" />
      </div>
    }
  >
    <div className={`h-8 flex-1 ${layer.bar}`} />
  </Row>
);

const PropRows = ({ prop }: { prop: Prop }) => (
  <>
    <Row
      left={
        <div className="grid h-8 grid-cols-[215px_25px_34px_258px_302px_1fr] items-center">
          <span />
          {prop.open ? <ChevronDown /> : <ChevronRight />}
          <Stopwatch />
          <span className="pt-0.5 pl-1 text-[#9f9f9f]">{prop.name}</span>
          <span className="pl-1 whitespace-nowrap">{prop.value}</span>
          <Whip />
        </div>
      }
    >
      <PropTrack />
    </Row>
    {prop.expr && (
      <Row
        left={
          <div className="flex h-8 items-center pl-[280px]">
            <span className="w-[287px] pt-0.5 text-[#9f9f9f]">{prop.exprName}</span>
            <button
              aria-label="Enable expression"
              className="flex h-[30px] w-8 items-center justify-center border-2 border-[#303030] bg-[#1f1f1f] text-[#2d8ceb]"
            >
              <Icon w={18} h={14}>
                <path d="M0 3h18M0 11h18" strokeWidth={4} />
              </Icon>
            </button>
            <span className="w-[37px] pl-1">{prop.graph && <Graph />}</span>
            <Whip />
            <span className="ml-2.5">
              <PlayDot />
            </span>
          </div>
        }
      >
        <code className="h-[34px] flex-1 overflow-hidden bg-[#343434] pl-3 font-['DejaVu_Sans_Mono',monospace] text-[32px] leading-[46px] whitespace-nowrap text-[#9f9f9f]">
          {prop.expr}
        </code>
      </Row>
    )}
  </>
);

const ColumnHeads = () => (
  <div className={`h-10 border-y-2 border-black bg-[#303030] text-[#9a9a9a] ${layerGrid}`}>
    <div className="flex items-center pl-[9px] text-[#b0b0b0]">
      <Eye />
      <Icon w={26} h={22} className="ml-1.5">
        <path d="M1 7h4l6-6v20l-6-6H1z" fill="currentColor" stroke="none" />
        <path d="M14 7c2 2 2 6 0 8M18 4c4 4 4 10 0 14M22 1c5 6 5 14 0 20" />
      </Icon>
      <span className="ml-2.5 size-3.5 rounded-full bg-[#b0b0b0]" />
      <Icon w={20} h={24} className="ml-3.5">
        <path d="M4 11V7a6 5 0 0 1 12 0v4" strokeWidth={3} />
        <rect x="1" y="11" width="18" height="12" fill="currentColor" stroke="none" />
        <path d="M10 14v5" stroke="#303030" strokeWidth={3} />
      </Icon>
      <span className="ml-3.5 h-6 w-0.5 bg-[#191919]" />
    </div>
    <Icon w={26} h={26} className="-ml-2 text-[#b0b0b0]">
      <path d="M1 2h10l14 14-9 10L1 11z" fill="currentColor" stroke="none" />
      <circle cx="6" cy="7" r="2" fill="#303030" stroke="none" />
    </Icon>
    <span className="flex items-center gap-[9px] pl-1 text-[19px]">
      <span className="h-6 w-0.5 bg-[#191919]" />#
      <span className="ml-auto h-6 w-0.5 bg-[#191919]" />
    </span>
    <span className="pl-1.5 text-[20px] whitespace-nowrap">Layer Name</span>
    <span />
    <span className="h-6 w-0.5 bg-[#191919]" />
    <div className="flex text-[#b0b0b0]">
      {[
        <Shy />,
        <Sun />,
        <Quality dotted />,
        <Fx />,
        <Film />,
        <Blur />,
        <Adjust />,
        <Cube />,
      ].map((s, i) => (
        <Box key={i} dark={false}>
          {s}
        </Box>
      ))}
    </div>
    <span className="ml-[26px] h-6 w-0.5 bg-[#191919]" />
    <span className="pl-1 text-[20px] whitespace-nowrap">Parent &amp; Link</span>
    <span />
    <span className="ml-2 h-6 w-0.5 bg-[#191919]" />
  </div>
);

const ticks = Array.from({ length: 21 }, (_, i) => ({
  label: `${String(Math.floor(i / 2)).padStart(2, "0")}:${i % 2 ? "15" : "00"}f`,
  major: i % 2 === 0,
}));

const Ruler = () => (
  <div className="flex flex-col justify-end">
    <div className="flex h-5 rounded-t-xl border-y-2 border-black bg-[#161616]">
      <span className="mr-0.5 w-[13px] rounded-l-full bg-[#2d8ceb]" />
      <span className="flex-1 bg-[#676767]" />
      <span className="ml-0.5 w-3 rounded-r-full bg-[#2d8ceb]" />
    </div>
    <div className="h-[38px] overflow-hidden pr-3.5 pl-[15px]">
      <div className="flex h-full justify-between">
        {ticks.map((t) => (
          <div key={t.label} className="flex w-0 flex-col items-center justify-between">
            <span className="h-6 text-[19px] leading-7 text-[#9f9f9f]">{t.label}</span>
            <span className={`w-0.5 shrink-0 bg-[#8c8c8c] ${t.major ? "h-3.5" : "h-2.5"}`} />
          </div>
        ))}
      </div>
    </div>
    <div className="flex h-[34px] border-y-2 border-black">
      <span className="mr-0.5 ml-[3px] w-2.5 rounded-l-lg bg-[#2d8ceb]" />
      <span className="flex-1 border-t-2 border-[#6e6e6e] bg-[#5e5e5e]" />
      <span className="mr-0.5 ml-0.5 w-2.5 rounded-r-lg bg-[#2d8ceb]" />
    </div>
    <div className="h-2 border-b-2 border-black pr-3.5 pl-[15px]">
      <div className="h-1.5 bg-[#12c21e]" />
    </div>
  </div>
);

const TimelineTop = () => (
  <div className="flex h-[164px] shrink-0">
    <div className="flex w-[1107px] shrink-0 flex-col">
      <div className="flex h-[52px] items-start pl-[50px]">
        <span className="mt-3.5 size-5 bg-[#a99873]" />
        <button className="mt-3 ml-[22px] leading-8 text-[#9f9f9f]">Main</button>
        <div className="ml-[78px] flex h-[50px] items-center border-b-4 border-[#b3b3b3] pt-2">
          <Close />
          <span className="ml-[18px] size-5 bg-[#a99873]" />
          <button className="mr-5 ml-[22px] text-[#dcdcdc]">Depth Matte</button>
          <Burger />
        </div>
      </div>
      <div className="flex h-[72px] items-center">
        <div className="w-[200px] pl-5">
          <p className="pl-1 text-[28px] leading-8 font-bold text-[#2f96ea]">0;00;00;00</p>
          <p className="text-[20px] leading-6 text-[#1f6aa8]">00000 (29.97 fps)</p>
        </div>
        <label className="flex h-[38px] w-[571px] items-center rounded border-2 border-[#2e2e2e] bg-[#151515] pl-2.5 text-[#cfcfcf]">
          <SearchLeft />
          <Triangle />
          <input aria-label="Search layers" className="min-w-0 flex-1 bg-transparent pl-2 outline-none" />
        </label>
        <Icon w={36} h={30} className="ml-8">
          <path d="M0 6h12M14 6h12M20 6v14h6" />
          <path d="M0 3h11v7H0zM17 2h12v8H17zM20 15h10v7H20zM24 25h8l-4 5z" fill="currentColor" stroke="none" />
        </Icon>
        <Icon w={32} h={28} className="ml-8">
          <path d="M0 16h32v10H0z" fill="#6b6b6b" stroke="none" />
          <path d="M3 13C3 4 8 1 16 1s13 3 13 12v2H3z" fill="currentColor" stroke="none" />
          <circle cx="12" cy="9" r="3" fill="#252525" stroke="none" />
          <circle cx="20" cy="9" r="3" fill="#252525" stroke="none" />
          <path d="M16 12v12" strokeWidth={4} />
        </Icon>
        <Icon w={30} h={30} className="ml-5" box="0 0 26 26">
          <rect x="9" y="1" width="16" height="19" fill="currentColor" stroke="none" />
          <path d="M12 3v16M22 3v16" stroke="#333" strokeDasharray="3 2" />
          <path d="M14 10h6" stroke="#333" />
          <path d="M4 6v18h15" strokeWidth={4} />
        </Icon>
        <Icon w={30} h={30} className="ml-5" box="0 0 26 26">
          <circle cx="9" cy="17" r="8" />
          <circle cx="12" cy="14" r="8" fill="#333" />
          <circle cx="16" cy="10" r="8" fill="#777" />
        </Icon>
        <Icon w={34} h={32} className="ml-9">
          <rect x="2" y="6" width="30" height="24" />
          <path d="M6 12c12 0 8 14 20 14M8 0v6M15 2v4M21 2v4M27 0v6" />
        </Icon>
      </div>
      <ColumnHeads />
    </div>
    <div className="flex min-w-0 flex-1 flex-col justify-end">
      <Ruler />
    </div>
  </div>
);

const Annotation = () => (
  <div className="absolute top-[100px] left-[2246px] flex items-start font-['Liberation_Sans',Arial,sans-serif] text-[44px] leading-[53px] text-white">
    <Icon w={232} h={160}>
      <path d="M20 22C66 70 150 152 230 142" strokeWidth={7} />
      <path d="M5 0L31 10L23 17L12 26Z" fill="white" stroke="none" />
    </Icon>
    <p className="mt-[79px] ml-1 whitespace-nowrap">
      Main comp camera copied with Property Links
      <br />
      then pasted in the depth map pre-comp
    </p>
  </div>
);

const ShapeRows = () => (
  <>
    <Row
      left={
        <div className="flex h-8 items-center pl-[181px]">
          <ChevronDown />
          <span className="ml-4 w-[501px] pt-0.5 text-[#9f9f9f]">Contents</span>
          <span className="mr-1.5 text-[#9f9f9f]">Add:</span>
          <PlayDot />
        </div>
      }
    >
      <PropTrack />
    </Row>
    <Row
      left={
        <div className="flex h-8 items-center pl-1.5">
          <Box>
            <Eye />
          </Box>
          <span className="ml-[179px]">
            <ChevronDown />
          </span>
          <span className="ml-4 w-[288px] pt-0.5 text-[#9f9f9f]">Rectangle 1</span>
          <Select label="Blend mode" value="Normal" className="h-[30px] w-[254px] border border-[#303030]" />
        </div>
      }
    >
      <PropTrack />
    </Row>
    <Row
      left={
        <div className="flex h-8 items-center pl-1.5">
          <Box>
            <Eye />
          </Box>
          <span className="ml-[213px]">
            <ChevronDown />
          </span>
          <span className="ml-4 w-[255px] pt-0.5 text-[#9f9f9f]">Rectangle Path 1</span>
          {["text-[#2d8ceb]", "text-[#b0b0b0]"].map((c) => (
            <span key={c} className={`mr-0.5 flex h-8 w-[33px] items-start justify-center bg-[#161616] pt-1 ${c}`}>
              <Icon w={28} h={24}>
                <path d="M7 5h14" strokeWidth={3} />
                <rect x="1" y="2" width="6" height="6" />
                <rect x="21" y="2" width="6" height="6" />
                <path d="M8 14l6 5 6-5" />
              </Icon>
            </span>
          ))}
        </div>
      }
    >
      <PropTrack />
    </Row>
  </>
);

const StatusBar = () => (
  <div className="flex h-[34px] w-[1321px] shrink-0 items-center border-t-2 border-black pt-0.5 pl-2 text-[#9f9f9f]">
    <div className="flex w-[522px] items-center">
      <Icon w={30} h={28} className="text-[#2d8ceb]">
        <path d="M10 18H3V3h14v4M14 22H8V9h14v4" />
        <rect x="14" y="14" width="13" height="12" />
        <path d="M20 19h2v2h-2z" fill="currentColor" />
      </Icon>
      <Icon w={28} h={26} className="ml-3">
        <circle cx="11" cy="9" r="8" />
        <rect x="12" y="9" width="14" height="14" />
      </Icon>
      <Icon w={26} h={26} className="ml-2.5">
        <path d="M9 1h8v8l6 4-6 4v8H9v-8l-6-4 6-4z" fill="#777" stroke="none" />
        <path d="M9 0v8l-5 5 5 5v8M17 0v8l5 5-5 5v8" />
      </Icon>
      <Icon w={28} h={26} className="ml-3">
        <circle cx="10" cy="11" r="9" fill="currentColor" stroke="none" />
        <path d="M2 24h20l4-13M20 3l3 8M26 3l-2 8" strokeWidth={3} />
      </Icon>
      <span className="ml-4 whitespace-nowrap">Frame Render Time</span>
      <b className="ml-2.5 font-semibold text-[#6bdcb8]">33ms</b>
    </div>
    <button className="h-[30px] w-[267px] rounded border-2 border-[#303030] bg-[#1b1b1b] leading-[26px]">
      Toggle Switches / Modes
    </button>
    <Icon w={20} h={10} className="ml-auto">
      <path d="M0 10l6-6 2 2 5-6 7 10z" fill="currentColor" stroke="none" />
    </Icon>
    <input
      aria-label="Timeline zoom"
      type="range"
      defaultValue={0}
      className="mr-6 ml-5 h-5 w-[96px] appearance-none bg-[linear-gradient(#444,#444)] bg-[length:100%_4px] bg-center bg-no-repeat [&::-webkit-slider-thumb]:size-5 [&::-webkit-slider-thumb]:appearance-none [&::-webkit-slider-thumb]:rounded-full [&::-webkit-slider-thumb]:border-[3px] [&::-webkit-slider-thumb]:border-[#9f9f9f] [&::-webkit-slider-thumb]:bg-[#252525]"
    />
    <Icon w={34} h={14} className="mr-2">
      <path d="M0 14l9-11 3 3-6 8zM9 14L20 0l14 14z" fill="currentColor" stroke="none" />
    </Icon>
  </div>
);

const Timeline = () => (
  <section className="relative mx-0.5 mb-0.5 flex min-h-0 min-w-0 flex-1 overflow-hidden rounded-b-xl border-2 border-[#2f86d8] bg-[#252525] text-[21px] leading-7">
    <div className="relative flex min-w-0 flex-1 flex-col border-r-2 border-[#191919]">
      <TimelineTop />
      <div className="relative flex min-h-0 flex-1 flex-col overflow-hidden">
        <LayerRow layer={layers[0]} />
        <LayerRow layer={layers[1]} />
        {props.map((p) => (
          <PropRows key={p.name} prop={p} />
        ))}
        <LayerRow layer={layers[2]} />
        <ShapeRows />
        <span className="absolute inset-y-0 left-[1122px] w-0.5 bg-[#2d8ceb]" />
        <Annotation />
      </div>
      <StatusBar />
      <Icon w={24} h={70} className="absolute top-[94px] left-[1111px] text-[#2d8ceb]">
        <path d="M0 0h24v12L12 28 0 12z" fill="currentColor" stroke="none" />
        <path d="M12 14v56" />
      </Icon>
    </div>
    <div className="flex w-8 shrink-0 flex-col items-center pb-[34px] text-[#b0b0b0]">
      <Icon w={22} h={28} className="mt-32">
        <path d="M0 0h22v19l-11 9L0 19z" fill="currentColor" stroke="none" />
      </Icon>
      <span className="mt-1.5 h-0.5 w-full bg-black" />
      <Icon w={30} h={28} className="mt-1">
        <path d="M2 16L16 2v14z" />
        <path d="M16 5h14v14H16z" fill="currentColor" stroke="none" />
        <circle cx="13" cy="19" r="7" fill="#252525" />
      </Icon>
      <span className="mt-1 h-[684px] w-[30px] rounded-full bg-[#303030]" />
    </div>
  </section>
);

export default function App() {
  return (
    <div className="flex h-screen flex-col overflow-hidden bg-[#788c9e] font-['Noto_Sans',sans-serif] text-[#b0b0b0]">
      <MenuBar />
      <TitleBar />
      <div className="flex min-h-0 flex-1 flex-col bg-[#161616]">
        <Toolbar />
        <main className="mt-1 flex shrink-0 gap-2">
          <EffectControls />
          <PlexusPanel />
          <CompPanel />
          <RightPanels />
        </main>
        <div className="mt-2 flex min-h-0 flex-1">
          <Timeline />
        </div>
      </div>
    </div>
  );
}
